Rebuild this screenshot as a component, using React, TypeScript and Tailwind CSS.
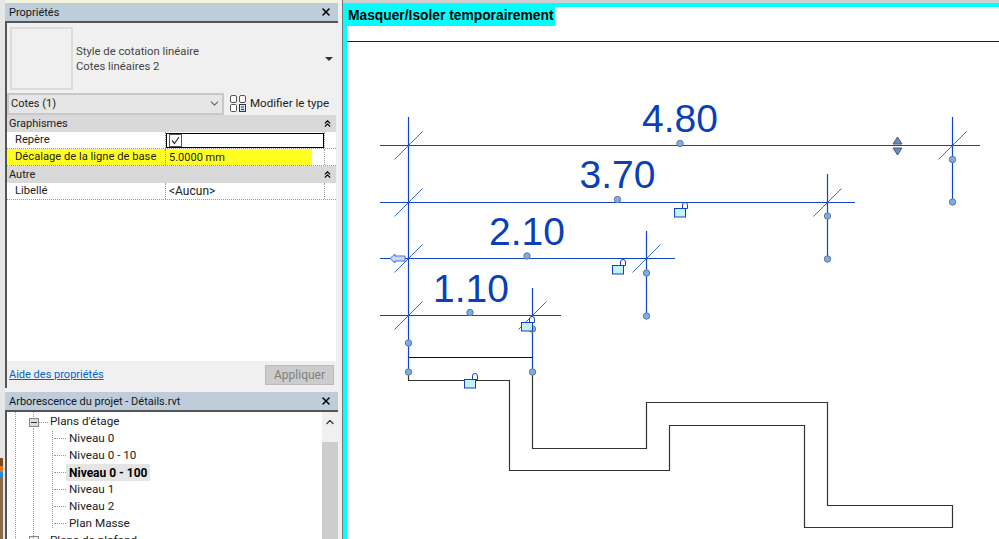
import { ChevronDown, ChevronUp, ChevronsUp, X } from "lucide-react";

const BLUE = "#1044c4";

function PanelTitle({ title }: { title: string }) {
  return (
    <div className="flex h-[18px] shrink-0 items-center justify-between bg-[#bfcddb] pl-[4px] pr-[6px] text-[11px] leading-none text-[#101820]">
      <span>{title}</span>
      <X className="h-[12px] w-[12px] text-black" strokeWidth={3} />
    </div>
  );
}

function GroupHeader({ title }: { title: string }) {
  return (
    <div className="flex h-[17px] shrink-0 items-center justify-between bg-[#d9d9d9] pl-[2px] pr-[3px] text-[11px] leading-none text-[#222]">
      <span>{title}</span>
      <ChevronsUp className="h-[11px] w-[11px] text-black" strokeWidth={2.5} />
    </div>
  );
}

function PropRow({ label, value, yellow }: { label: string; value?: string; yellow?: boolean }) {
  return (
    <div className="grid h-[17px] shrink-0 grid-cols-[159px_158px_11px] border-b border-dotted border-[#999] bg-white text-[11.2px] leading-none text-[#222]">
      <div
        className={`flex items-center whitespace-nowrap border-r border-dotted border-[#999] pl-[8px] ${
          yellow ? "bg-[#ffff20]" : ""
        }`}
      >
        {label}
      </div>
      <div className="flex items-center">
        {yellow ? (
          <div className="flex h-full w-[146px] items-center bg-[#ffff20] pl-[3px] text-[11px]">{value}</div>
        ) : (
          <span className="pl-[3px] text-[12px]">{value}</span>
        )}
      </div>
      <div className="border-l border-dotted border-[#999]" />
    </div>
  );
}

function TypeIcon() {
  return (
    <svg className="shrink-0" width="16" height="17" viewBox="0 0 16 17" fill="none" stroke="#555" strokeWidth="1">
      <rect x="0.5" y="0.5" width="6" height="7" rx="1.5" fill="#fff" />
      <rect x="9.5" y="0.5" width="6" height="7" rx="1.5" fill="#fff" />
      <rect x="0.5" y="9.5" width="6" height="7" rx="1" fill="#fff" />
      <rect x="9.5" y="9.5" width="6" height="7" fill="#dce6f2" stroke="#334" />
      <path d="M11 12h3M11 14.5h3" stroke="#1b3a6b" />
    </svg>
  );
}

function TreeRow({ label, active }: { label: string; active?: boolean }) {
  return (
    <div className="flex h-[17px] items-center pl-[47px]">
      <div className="w-[12px] border-t border-dotted border-[#999]" />
      <span
        className={`flex h-[17px] items-center whitespace-nowrap px-[3px] leading-none ${
          active ? "w-[84px] bg-[#e5e5e5] text-[12px] font-bold text-black" : "text-[11.7px] text-[#222]"
        }`}
      >
        {label}
      </span>
    </div>
  );
}

const ticks: [number, number][] = [
  [408.5, 145.5],
  [408.5, 202.5],
  [408.5, 258.5],
  [408.5, 315.5],
  [532.5, 315.5],
  [646.5, 258.5],
  [827.5, 202.5],
  [952.5, 145.5],
];

const dimLines: [number, number, number][] = [
  [380, 980, 145.5],
  [380, 855, 202.5],
  [380, 675, 258.5],
  [380, 561, 315.5],
];

const witness: [number, number, number][] = [
  [408.5, 117, 372],
  [532.5, 288, 372],
  [646.5, 231, 316],
  [827.5, 174, 259],
  [952.5, 117, 202],
];

const nodes: [number, number][] = [
  [680, 143.5],
  [617.5, 199.5],
  [527, 256],
  [470, 312.5],
  [408.5, 343],
  [408.5, 372],
  [532.5, 329],
  [532.5, 372],
  [646.5, 273],
  [646.5, 316],
  [827.5, 216],
  [827.5, 259],
  [952.5, 159.5],
  [952.5, 202],
];

const locks: [number, number][] = [
  [674.5, 208.5],
  [612.5, 265.5],
  [521.5, 322.5],
  [464.5, 379.5],
];

const labels: [string, number, number][] = [
  ["4.80", 680, 132],
  ["3.70", 617.5, 188],
  ["2.10", 527, 245],
  ["1.10", 471, 302],
];

function Drawing() {
  return (
    <svg width="652" height="497" viewBox="347 42 652 497" className="block font-['Liberation_Sans',sans-serif]">
      <path
        d="M408.5 372V380.5H509.5V470.5H669.5V425.5H804.5V527.5H952.5V505.5H827.5V402.5H646.5V448.5H532.5V372"
        fill="none"
        stroke="#333"
        strokeWidth="1.2"
      />
      <path d="M408.5 357.5H532.5" stroke="#111" />
      {dimLines.map(([a, b, y]) => (
        <path key={y} d={`M${a} ${y}H${b}`} stroke={BLUE} strokeWidth="1.2" />
      ))}
      {witness.map(([x, a, b]) => (
        <path key={x} d={`M${x} ${a}V${b}`} stroke={BLUE} strokeWidth="1.2" />
      ))}
      {ticks.map(([x, y]) => (
        <path key={`${x}-${y}`} d={`M${x - 14} ${y + 14}L${x + 14} ${y - 14}`} stroke="#3a68d8" />
      ))}
      {nodes.map(([x, y]) => (
        <circle key={`${x}-${y}`} cx={x} cy={y} r="3.2" fill="#78aef0" stroke="#66788c" />
      ))}
      {locks.map(([x, y]) => (
        <g key={x}>
          <path d={`M${x + 8} ${y}v-3.5a2.5 2.5 0 0 1 5 0v3.5z`} fill="#fff" stroke={BLUE} />
          <rect x={x} y={y} width="11" height="8.5" fill="#c4f0f8" stroke={BLUE} />
        </g>
      ))}
      {labels.map(([t, x, y]) => (
        <text key={t} x={x} y={y} textAnchor="middle" fontSize="39" fill="#0b3fb8">
          {t}
        </text>
      ))}
      <path d="M405 256H395V254L390 258.5L395 263V261H405Z" fill="#c8d8f8" stroke="#4a70d0" />
      <path d="M897.5 137L902 144H893Z" fill="#6c8cc8" stroke="#44597a" />
      <path d="M897.5 155L902 148H893Z" fill="#6c8cc8" stroke="#44597a" />
    </svg>
  );
}

export default function App() {
  return (
    <div className="flex h-[539px] w-[999px] overflow-hidden bg-[#f0f0f0] font-['Roboto',sans-serif]">
      {/* bord gauche */}
      <div className="flex w-[5px] flex-col bg-[#e6e6e6]">
        <div className="h-[458px]" />
        <div className="h-[8px] w-[3px] bg-[#7a4a20]" />
        <div className="h-[6px] w-[3px] bg-[#d9772a]" />
        <div className="h-[6px] w-[3px] bg-[#2a88d8]" />
        <div className="w-[3px] flex-1 bg-[#8a6a4a]" />
      </div>

      <div className="flex h-[539px] w-[333px] flex-col overflow-hidden">
        <div className="h-[3px] shrink-0 bg-[#f1f3dc]" />
        <PanelTitle title="Propriétés" />

        <div className="flex h-[367px] shrink-0 flex-col border-l-2 border-t-2 border-[#555] bg-[#f0f0f0] pr-[2px]">
          <div className="flex h-[69px] shrink-0 items-center pl-[3px] pr-[3px] pt-[2px]">
            <div className="h-[63px] w-[63px] shrink-0 border-2 border-[#dcdcdc]" />
            <div className="ml-[3px] flex-1 text-[11.3px] leading-[15px] text-[#444]">
              <div>Style de cotation linéaire</div>
              <div>Cotes linéaires 2</div>
            </div>
            <div className="h-0 w-0 border-x-[4px] border-t-[4px] border-x-transparent border-t-[#333]" />
          </div>

          <div className="flex h-[23px] shrink-0 items-center">
            <div className="flex h-[22px] w-[217px] items-center justify-between border-2 border-[#c8c8c8] bg-[#e6e6e6] pl-[2px] pr-[1px] text-[11px] leading-none text-[#222]">
              <span>Cotes (1)</span>
              <ChevronDown className="h-[13px] w-[13px] text-[#666]" />
            </div>
            <div className="ml-[6px] flex items-center gap-[4px] whitespace-nowrap text-[11.6px] leading-none text-[#222]">
              <TypeIcon />
              <span>Modifier le type</span>
            </div>
          </div>

          <GroupHeader title="Graphismes" />
          <div className="relative shrink-0">
            <PropRow label="Repère" />
            <div className="absolute left-[159px] top-[1px] flex h-[15px] w-[158px] items-center border border-black bg-white pl-[2px]">
              <svg width="13" height="13" viewBox="0 0 13 13" fill="none">
                <rect x="0.5" y="0.5" width="12" height="12" fill="#fff" stroke="#555" />
                <path d="M3 6.5L5.5 9.5L10 3" stroke="#333" strokeWidth="1.2" />
              </svg>
            </div>
          </div>
          <PropRow label="Décalage de la ligne de base" value="5.0000 mm" yellow />
          <GroupHeader title="Autre" />
          <PropRow label="Libellé" value="<Aucun>" />

          <div className="flex-1 bg-white" />

          <div className="flex h-[27px] shrink-0 items-center justify-between pl-[2px] pr-[2px]">
            <a className="text-[11px] leading-none text-[#0066cc] underline">Aide des propriétés</a>
            <div className="flex h-[20px] w-[69px] items-center justify-center border border-[#bcbcbc] bg-[#cccccc] text-[12px] leading-none text-[#808080]">
              Appliquer
            </div>
          </div>
        </div>

        <div className="h-[4px] shrink-0" />
        <PanelTitle title="Arborescence du projet - Détails.rvt" />

        <div className="relative flex min-h-0 flex-1 overflow-hidden border-l-2 border-t-2 border-[#555] bg-white">
          <div className="flex-1">
            <div className="flex h-[20px] items-center pl-[22px]">
              <div className="flex h-[9px] w-[10px] items-center justify-center border border-[#888] bg-[#ddd]">
                <div className="h-px w-[6px] bg-[#333]" />
              </div>
              <div className="w-[9px] border-t border-dotted border-[#999]" />
              <span className="pl-[2px] text-[11.7px] leading-none text-[#222]">Plans d'étage</span>
            </div>
            <div className="-mt-[2px]">
              <TreeRow label="Niveau 0" />
              <TreeRow label="Niveau 0 - 10" />
              <TreeRow label="Niveau 0 - 100" active />
              <TreeRow label="Niveau 1" />
              <TreeRow label="Niveau 2" />
              <TreeRow label="Plan Masse" />
            </div>
            <div className="flex h-[17px] items-center pl-[22px]">
              <div className="h-[9px] w-[10px] border border-[#888] bg-[#eee]" />
              <span className="pl-[11px] text-[11.7px] leading-none text-[#222]">Plans de plafond</span>
            </div>
          </div>
          <div className="flex w-[16px] flex-col bg-[#f0f0f0]">
            <div className="flex h-[30px] justify-center pt-[4px]">
              <ChevronUp className="h-[12px] w-[12px] text-[#444]" strokeWidth={3} />
            </div>
            <div className="flex-1 bg-[#cdcdcd]" />
          </div>
          {/* traits pointillés de l'arborescence */}
          <div className="absolute left-[8px] top-0 h-full border-l border-dotted border-[#999]" />
          <div className="absolute left-[26px] top-0 h-[5px] border-l border-dotted border-[#999]" />
          <div className="absolute left-[26px] top-[16px] h-[110px] border-l border-dotted border-[#999]" />
          <div className="absolute left-[45px] top-[19px] h-[97px] border-l border-dotted border-[#999]" />
        </div>
      </div>

      <div className="w-[5px] border-r border-[#777] bg-[#f0f0f0]" />

      <div className="flex flex-1 flex-col">
        <div className="h-[3px] bg-[#d0d0d0]" />
        <div className="flex flex-1 flex-col border-l-4 border-t-4 border-[#00ffff] bg-white">
          <div className="h-[19px] w-[208px] whitespace-nowrap bg-[#00ffff] pl-[1px] font-['Liberation_Sans',sans-serif] text-[13.8px] font-bold leading-[18px] text-black">
            Masquer/Isoler temporairement
          </div>
          <div className="mt-[15px] border-t border-[#222]" />
          <Drawing />
        </div>
      </div>
    </div>
  );
}
